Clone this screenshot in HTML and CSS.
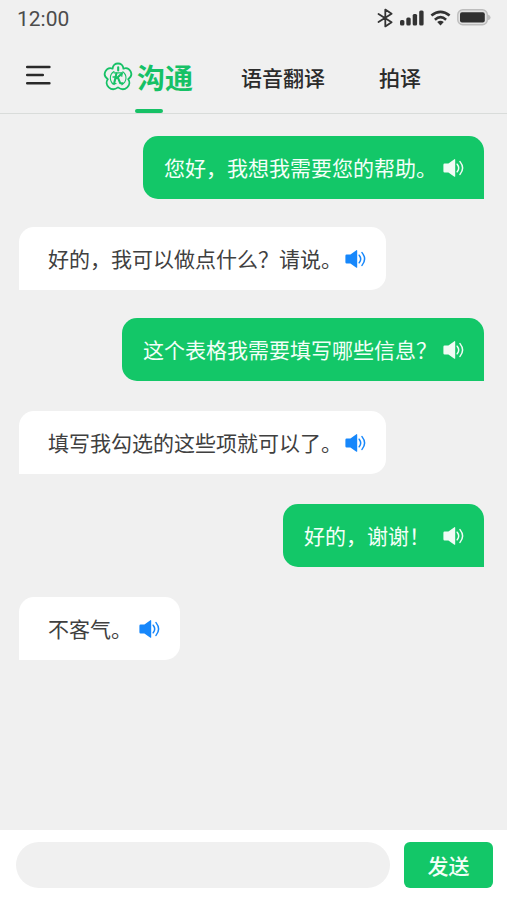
FILE: index.html
```html
<!DOCTYPE html>
<html lang="zh-CN">
<head>
<meta charset="utf-8">
<meta name="viewport" content="width=device-width, initial-scale=1">
<title>沟通</title>
<link rel="stylesheet" href="styles.css">
</head>
<body>
<svg class="defs" aria-hidden="true">
  <symbol id="speaker" viewBox="0 0 21 20">
    <path fill="currentColor" d="M1.6 5.6H5.4L11.4 1.2Q12.2 .8 12.2 1.8V18.2Q12.2 19.2 11.4 18.7L5.4 14.4H1.6Q.4 14.4 .4 13.2V6.8Q.4 5.6 1.6 5.6Z"/>
    <path fill="none" stroke="currentColor" stroke-width="1.5" stroke-linecap="round" d="M14.2 6.2Q17.2 10 14.2 13.8M17 3.6Q22.2 10 17 16.4"/>
  </symbol>
</svg>
<div class="app">
  <header class="header">
    <div class="status">
      <time>12:00</time>
      <div class="status-icons">
        <svg width="17" height="20" viewBox="0 0 17 20" fill="none" stroke="#333" stroke-width="1.8" stroke-linejoin="round" stroke-linecap="round"><path d="M1.5 6 14.6 14.2 8.3 18.4V1.6L14.6 5.8 1.5 14"/></svg>
        <svg width="24" height="16" viewBox="0 0 24 16" fill="#333"><rect x="0" y="10" width="4.4" height="5.5" rx="1.5"/><rect x="6.3" y="7.5" width="4.4" height="8" rx="1.5"/><rect x="12.7" y="4" width="4.4" height="11.5" rx="1.5"/><rect x="19.2" y=".5" width="4.4" height="15" rx="1.5"/></svg>
        <svg width="21" height="16" viewBox="0 0 20 16" fill="none" stroke="#333" stroke-width="2.6"><path d="M.9 5.6Q10-1.9 19.1 5.6M4.4 9.7Q10 4.7 15.6 9.7"/><path fill="#333" stroke="none" d="M6.7 12Q10 9.4 13.3 12L10 15.4Z"/></svg>
        <svg width="34" height="17" viewBox="0 0 34 17"><rect x=".8" y=".8" width="29.5" height="15" rx="5" fill="#e2e2e2" stroke="#bdbdbd" stroke-width="1.4"/><path d="M31 5.5Q33.6 6.5 33.6 8.4T31 11.3Z" fill="#bdbdbd"/><rect x="3" y="3.2" width="24.8" height="10.2" rx="2" fill="#303030"/></svg>
      </div>
    </div>
    <nav class="nav">
      <button class="menu" type="button" aria-label="菜单">
        <svg width="27" height="21" viewBox="0 0 27 21" stroke="#292929" stroke-width="2.5" stroke-linecap="round"><path d="M2.2 2H24.4M2.2 10H17.8M2.2 18.2H24.4"/></svg>
      </button>
      <a class="tab tab-active" href="#" aria-current="page">
        <svg width="30" height="30" viewBox="0 0 30 30" fill="none" stroke="#16c166" stroke-linecap="round" stroke-linejoin="round">
          <path stroke-width="1.8" d="M9.6 6.6C10 -.2 20 -.2 20.4 6.6C26.8 4.4 31.6 12.8 25.2 17.2C29.2 22.8 22 30.6 15 25.4C8 30.6 .8 22.8 4.8 17.2C-1.6 12.8 3.2 4.4 9.6 6.6Z"/>
          <path stroke-width="1.1" d="M11 9.5C6 12.5 6.2 19.8 11.2 22.6M19.8 9.8C24.2 13 24.2 19.5 18.8 22.8"/>
          <path stroke-width="2.1" d="M15.2 5.2V8.4M13.4 11.5 11.2 21.2M18.8 11.6 13.6 16.2M15 15.9 17.2 21.2H19.6"/>
          <path stroke-width="1.3" d="M11 10.8H19.4M9.4 21.6H13M18.8 10.8V14.2M10 15H13"/>
        </svg>
        <span>沟通</span>
      </a>
      <a class="tab" href="#">语音翻译</a>
      <a class="tab" href="#">拍译</a>
    </nav>
  </header>
  <main class="chat">
    <section class="turns">
      <article class="bubble sent"><p>您好，我想我需要您的帮助。</p><button class="play" type="button" aria-label="播放"><svg><use href="#speaker"/></svg></button></article>
      <article class="bubble received"><p>好的，我可以做点什么？请说。</p><button class="play" type="button" aria-label="播放"><svg><use href="#speaker"/></svg></button></article>
      <article class="bubble sent"><p>这个表格我需要填写哪些信息？</p><button class="play" type="button" aria-label="播放"><svg><use href="#speaker"/></svg></button></article>
    </section>
    <section class="turns turns-loose">
      <article class="bubble received"><p>填写我勾选的这些项就可以了。</p><button class="play" type="button" aria-label="播放"><svg><use href="#speaker"/></svg></button></article>
      <article class="bubble sent short"><p>好的，谢谢！</p><button class="play" type="button" aria-label="播放"><svg><use href="#speaker"/></svg></button></article>
      <article class="bubble received short"><p>不客气。</p><button class="play" type="button" aria-label="播放"><svg><use href="#speaker"/></svg></button></article>
    </section>
  </main>
  <form class="composer">
    <input class="message" type="text" aria-label="消息">
    <button class="send" type="button">发送</button>
  </form>
</div>
</body>
</html>
```
FILE: styles.css
```css
* {
  box-sizing: border-box;
}

body {
  margin: 0;
  background: #f0f0f0;
  color: #404040;
  font-family: "Noto Sans CJK SC", sans-serif;
  font-size: 21px;
}

button,
input {
  border: 0;
  padding: 0;
  font: inherit;
}

svg {
  display: block;
}

.defs {
  display: none;
}

.app {
  display: flex;
  flex-direction: column;
  min-height: 100vh;
}

.header {
  border-bottom: 1px solid #d9dcda;
}

.status {
  display: flex;
  align-items: center;
  justify-content: space-between;
  height: 38px;
  padding: 0 16px 0 17px;
  color: #4c4c4c;
  font-family: Roboto, sans-serif;
}

.status-icons {
  display: flex;
  align-items: center;
  gap: 6px;
  padding-bottom: 3px;
}

.nav {
  display: flex;
  height: 75px;
  padding-left: 25px;
}

.menu {
  align-self: center;
  margin-right: 51px;
  background: none;
}

.tab {
  position: relative;
  display: flex;
  align-items: center;
  gap: 4px;
  margin-right: 54px;
  padding-top: 2px;
  color: #2b2b2b;
  font-weight: 500;
  text-decoration: none;
  white-space: nowrap;
}

.tab-active {
  margin-right: 48px;
  color: #16c166;
  font-size: 28px;
  font-weight: 700;
}

.tab-active::after {
  content: "";
  position: absolute;
  bottom: 0;
  left: 50%;
  width: 28px;
  height: 4px;
  margin-left: -13px;
  border-radius: 2px;
  background: #16c166;
}

.chat {
  flex: 1;
  display: flex;
  flex-direction: column;
  gap: 30px;
  padding: 22px 23px 22px 19px;
}

.turns {
  display: flex;
  flex-direction: column;
  gap: 28px;
}

.turns-loose {
  gap: 30px;
}

.bubble {
  display: flex;
  align-items: center;
  min-height: 63px;
  padding: 16px 20px;
}

.bubble p {
  margin: 0;
  line-height: 31px;
}

.sent {
  align-self: flex-end;
  gap: 6px;
  padding-left: 21px;
  border-radius: 15px 15px 0 15px;
  background: #13c768;
  color: #f3fff8;
}

.received {
  align-self: flex-start;
  gap: 3px;
  padding-left: 29px;
  border-radius: 15px 15px 15px 0;
  background: #fff;
}

.sent.short {
  gap: 13px;
}

.received.short {
  gap: 7px;
}

.play {
  flex: none;
  background: none;
  color: #1687fb;
}

.sent .play {
  color: #f0fbf5;
}

.play svg {
  width: 21px;
  height: 20px;
}

.composer {
  display: flex;
  gap: 14px;
  padding: 12px 14px 12px 16px;
  background: #fff;
}

.message {
  flex: 1;
  min-width: 0;
  height: 46px;
  padding: 0 20px;
  border-radius: 23px;
  background: #f0f0f0;
}

.send {
  width: 89px;
  height: 46px;
  border-radius: 6px;
  background: #13c768;
  color: #f3fff8;
  font-weight: 500;
}
```
